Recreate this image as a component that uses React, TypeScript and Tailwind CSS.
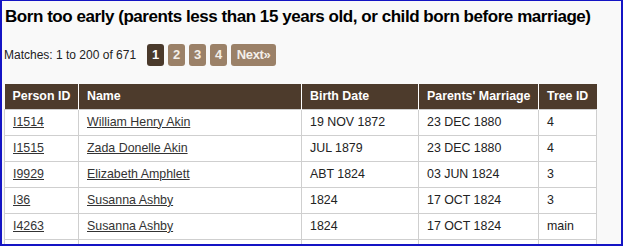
const rows = [
  { id: "I1514", name: "William Henry Akin", birth: "19 NOV 1872", marriage: "23 DEC 1880", tree: "4" },
  { id: "I1515", name: "Zada Donelle Akin", birth: "JUL 1879", marriage: "23 DEC 1880", tree: "4" },
  { id: "I9929", name: "Elizabeth Amphlett", birth: "ABT 1824", marriage: "03 JUN 1824", tree: "3" },
  { id: "I36", name: "Susanna Ashby", birth: "1824", marriage: "17 OCT 1824", tree: "3" },
  { id: "I4263", name: "Susanna Ashby", birth: "1824", marriage: "17 OCT 1824", tree: "main" },
];

const pages = ["1", "2", "3", "4"];

export default function App() {
  return (
    <div
      className="h-[246px] w-[623px] overflow-hidden border-x-2 border-t border-b-2 border-[#1414c4] bg-[#f9f9f9] pl-[2px] text-[#222]"
      style={{ fontFamily: '"Liberation Sans", Arial, sans-serif' }}
    >
      <h1 className="whitespace-nowrap pl-[1px] pt-[5px] text-[17px] font-bold leading-[22px] tracking-[-0.45px] text-black">
        Born too early (parents less than 15 years old, or child born before marriage)
      </h1>

      <div className="mt-[16px] flex items-center">
        <span className="text-[12px]">Matches: 1 to 200 of 671</span>
        <div className="ml-[11px] flex gap-[4px]">
          {pages.map((p) => (
            <span
              key={p}
              className={
                p === "1"
                  ? "flex h-[22px] w-[17px] items-center justify-center rounded-[3px] bg-[#4a3a2c] text-[13px] font-bold text-white"
                  : "flex h-[22px] w-[17px] items-center justify-center rounded-[3px] bg-[#9b8168] text-[13px] font-bold text-[#f4efe9]"
              }
            >
              {p}
            </span>
          ))}
          <span className="flex h-[22px] w-[45px] items-center justify-center rounded-[3px] bg-[#9b8168] text-[13px] font-bold tracking-[-0.3px] text-[#f4efe9]">
            Next»
          </span>
        </div>
      </div>

      <table className="mt-[18px] w-[593px] border-collapse text-[12.4px]">
        <thead>
          <tr className="h-[25px] bg-[#4d3b2c] text-left font-bold text-white">
            <th className="w-[74px] border-r border-white pl-[8px]">Person ID</th>
            <th className="w-[223px] border-r border-white pl-[8px]">Name</th>
            <th className="w-[117px] border-r border-white pl-[8px]">Birth Date</th>
            <th className="w-[120px] border-r border-white pl-[8px]">Parents' Marriage</th>
            <th className="pl-[8px]">Tree ID</th>
          </tr>
        </thead>
        <tbody>
          {rows.map((r) => (
            <tr key={r.id} className="h-[26px] bg-white">
              <td className="border border-[#cfcfcf] pl-[8px]">
                <a className="text-[#333] underline">{r.id}</a>
              </td>
              <td className="border border-[#cfcfcf] pl-[8px]">
                <a className="text-[#333] underline">{r.name}</a>
              </td>
              <td className="border border-[#cfcfcf] pl-[8px]">{r.birth}</td>
              <td className="border border-[#cfcfcf] pl-[8px]">{r.marriage}</td>
              <td className="border border-[#cfcfcf] pl-[8px]">{r.tree}</td>
            </tr>
          ))}
          <tr className="h-[26px] bg-white">
            <td className="border border-[#cfcfcf]" />
            <td className="border border-[#cfcfcf]" />
            <td className="border border-[#cfcfcf]" />
            <td className="border border-[#cfcfcf]" />
            <td className="border border-[#cfcfcf]" />
          </tr>
        </tbody>
      </table>
    </div>
  );
}
